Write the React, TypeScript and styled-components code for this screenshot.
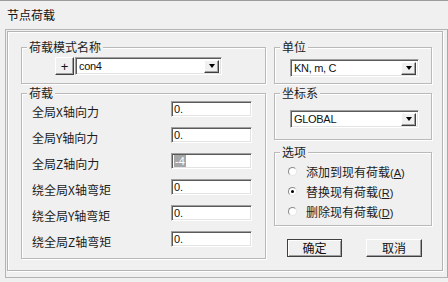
import React from "react";
import styled, { createGlobalStyle, css } from "styled-components";

const Global = createGlobalStyle`
  html, body { margin: 0; padding: 0; background: #f0f0f0; }
  body {
    font-family: "Noto Sans CJK SC", "Liberation Sans", sans-serif;
    font-size: 12px;
    color: #1c1c1c;
  }
  * { box-sizing: border-box; }
`;

const Window = styled.div`
  width: 448px;
  height: 282px;
  background: #f0f0f0;
  border-top: 1px solid #9c9c9c;
  display: flex;
  flex-direction: column;
  padding: 0 0 4px 5px;
  overflow: hidden;
`;

const TitleBar = styled.div`
  flex: 0 0 28px;
  height: 28px;
  padding-left: 2px;
  display: flex;
  align-items: center;
  font-size: 12px;
  line-height: 14px;
  color: #111;
`;

const ClientFrame = styled.div`
  flex: 1;
  min-height: 0;
  display: flex;
  border: 1px solid #b4b4b4;
  border-right-color: #a8a8a8;
  padding: 1px 4px 6px 1px;
`;

const Panel = styled.div`
  flex: 1;
  border: 1px solid #b4b4b4;
  box-shadow: inset 1px 1px 0 #fff, 1px 1px 0 #fff;
  padding: 7px 10px 0 13px;
  display: grid;
  grid-template-columns: 245px 158px;
  column-gap: 8px;
  align-items: start;
`;

const Column = styled.div<{ $gap?: number }>`
  display: flex;
  flex-direction: column;
  gap: ${(p) => p.$gap ?? 2}px;
`;

const Group = styled.fieldset<{ $pad: string; $top?: number }>`
  margin: ${(p) => p.$top ?? 0}px 0 0 0;
  min-width: 0;
  padding: ${(p) => p.$pad};
  border: 1px solid #b9b9b9;
  box-shadow: inset 1px 1px 0 #fff, 1px 1px 0 #fff;
`;

const Legend = styled.legend`
  margin-left: 5px;
  padding: 0 2px;
  font-size: 12px;
  line-height: 16px;
  background: #f0f0f0;
  color: #1c1c1c;
`;

const raised = css`
  background: #f0f0f0;
  border: 1px solid;
  border-color: #fff #404040 #404040 #fff;
  box-shadow: inset -1px -1px 0 #a0a0a0;
`;

const sunken = css`
  background: #fff;
  border: 1px solid;
  border-color: #a0a0a0 #fff #fff #a0a0a0;
  box-shadow: inset 1px 1px 0 #5a5a5a, inset -1px -1px 0 #e3e3e3;
`;

const ComboRow = styled.div<{ $indent: number }>`
  display: flex;
  align-items: center;
  padding-left: ${(p) => p.$indent}px;
`;

const PlusButton = styled.div`
  ${raised};
  width: 19px;
  height: 18px;
  margin-right: 1px;
  display: flex;
  align-items: center;
  justify-content: center;
  font-family: "Liberation Sans", sans-serif;
  font-size: 13px;
  line-height: 13px;
  color: #111;
`;

const Combo = styled.div<{ $w: number }>`
  ${sunken};
  width: ${(p) => p.$w}px;
  height: 18px;
  display: flex;
  align-items: center;
  padding: 2px 2px 2px 3px;
`;

const ComboText = styled.div`
  flex: 1;
  font-family: "Liberation Sans", sans-serif;
  font-size: 11px;
  letter-spacing: -0.3px;
  color: #111;
  line-height: 12px;
`;

const DropButton = styled.div`
  ${raised};
  width: 15px;
  height: 13px;
  display: flex;
  align-items: center;
  justify-content: center;
`;

const Arrow = styled.div`
  width: 0;
  height: 0;
  border-left: 3.5px solid transparent;
  border-right: 3.5px solid transparent;
  border-top: 4px solid #000;
`;

const FieldGrid = styled.div`
  display: grid;
  grid-template-columns: 139px 81px;
  grid-auto-rows: 16px;
  row-gap: 10px;
  padding-left: 10px;
`;

const FieldLabel = styled.div`
  font-size: 12px;
  line-height: 13px;
  padding-top: 4px;
  white-space: nowrap;
  color: #1c1c1c;
`;

const Input = styled.div`
  ${sunken};
  height: 16px;
  padding: 1px 2px;
  font-family: "Liberation Sans", sans-serif;
  font-size: 11px;
  line-height: 12px;
  color: #111;
  display: flex;
  align-items: center;
`;

const Selected = styled.span`
  background: #a6a6a6;
  color: #fff;
  padding: 0 1px;
  line-height: 12px;
`;

const RadioList = styled.div`
  display: flex;
  flex-direction: column;
  padding-left: 13px;
`;

const RadioRow = styled.div`
  height: 20px;
  display: flex;
  align-items: center;
  gap: 9px;
  font-size: 12px;
  color: #1c1c1c;
  white-space: nowrap;
`;

const RadioCircle = styled.div<{ $on?: boolean }>`
  width: 9px;
  height: 9px;
  border-radius: 50%;
  background: #fff;
  border: 1px solid;
  border-color: #8a8a8a #e6e6e6 #e6e6e6 #8a8a8a;
  display: flex;
  align-items: center;
  justify-content: center;
  &::after {
    content: "";
    width: 3px;
    height: 3px;
    border-radius: 50%;
    background: ${(p) => (p.$on ? "#000" : "transparent")};
  }
`;

const Latin = styled.span`
  font-family: "Liberation Sans", sans-serif;
  font-size: 11px;
`;

const ButtonRow = styled.div`
  display: flex;
  gap: 24px;
  padding-left: 13px;
  margin-top: 12px;
`;

const PushButton = styled.div<{ $w: number; $default?: boolean }>`
  ${raised};
  width: ${(p) => p.$w}px;
  height: 18px;
  display: flex;
  align-items: center;
  justify-content: center;
  font-size: 12px;
  line-height: 14px;
  color: #111;
  ${(p) =>
    p.$default &&
    css`
      border-color: #404040;
      box-shadow: inset 1px 1px 0 #fff, inset -1px -1px 0 #a0a0a0;
    `}
`;

const ComboBox = ({ w, text }: { w: number; text: string }) => (
  <Combo $w={w}>
    <ComboText>{text}</ComboText>
    <DropButton>
      <Arrow />
    </DropButton>
  </Combo>
);

const fields: { label: React.ReactNode; value: React.ReactNode }[] = [
  { label: "全局X轴向力", value: "0." },
  { label: "全局Y轴向力", value: "0." },
  { label: "全局Z轴向力", value: <Selected>-4</Selected> },
  { label: "绕全局X轴弯矩", value: "0." },
  { label: "绕全局Y轴弯矩", value: "0." },
  { label: "绕全局Z轴弯矩", value: "0." },
];

export default function App() {
  return (
    <>
      <Global />
      <Window>
        <TitleBar>节点荷载</TitleBar>
        <ClientFrame>
          <Panel>
            <Column $gap={1}>
              <Group $pad="2px 0 8px 0">
                <Legend>荷载模式名称</Legend>
                <ComboRow $indent={33}>
                  <PlusButton>+</PlusButton>
                  <ComboBox w={147} text="con4" />
                </ComboRow>
              </Group>
              <Group $pad="0 0 11px 0">
                <Legend>荷载</Legend>
                <FieldGrid>
                  {fields.map((f, i) => (
                    <React.Fragment key={i}>
                      <FieldLabel>{f.label}</FieldLabel>
                      <Input>{f.value}</Input>
                    </React.Fragment>
                  ))}
                </FieldGrid>
              </Group>
            </Column>
            <Column $gap={1}>
              <Group $pad="4px 0 6px 0">
                <Legend>单位</Legend>
                <ComboRow $indent={15}>
                  <ComboBox w={129} text="KN, m, C" />
                </ComboRow>
              </Group>
              <Group $pad="9px 0 11px 0">
                <Legend>坐标系</Legend>
                <ComboRow $indent={15}>
                  <ComboBox w={129} text="GLOBAL" />
                </ComboRow>
              </Group>
              <Group $pad="1px 0 4px 0" $top={3}>
                <Legend>选项</Legend>
                <RadioList>
                  <RadioRow>
                    <RadioCircle />
                    <span>
                      添加到现有荷载<Latin>(<u>A</u>)</Latin>
                    </span>
                  </RadioRow>
                  <RadioRow>
                    <RadioCircle $on />
                    <span>
                      替换现有荷载<Latin>(<u>R</u>)</Latin>
                    </span>
                  </RadioRow>
                  <RadioRow>
                    <RadioCircle />
                    <span>
                      删除现有荷载<Latin>(<u>D</u>)</Latin>
                    </span>
                  </RadioRow>
                </RadioList>
              </Group>
              <ButtonRow>
                <PushButton $w={55} $default>
                  确定
                </PushButton>
                <PushButton $w={56}>取消</PushButton>
              </ButtonRow>
            </Column>
          </Panel>
        </ClientFrame>
      </Window>
    </>
  );
}
